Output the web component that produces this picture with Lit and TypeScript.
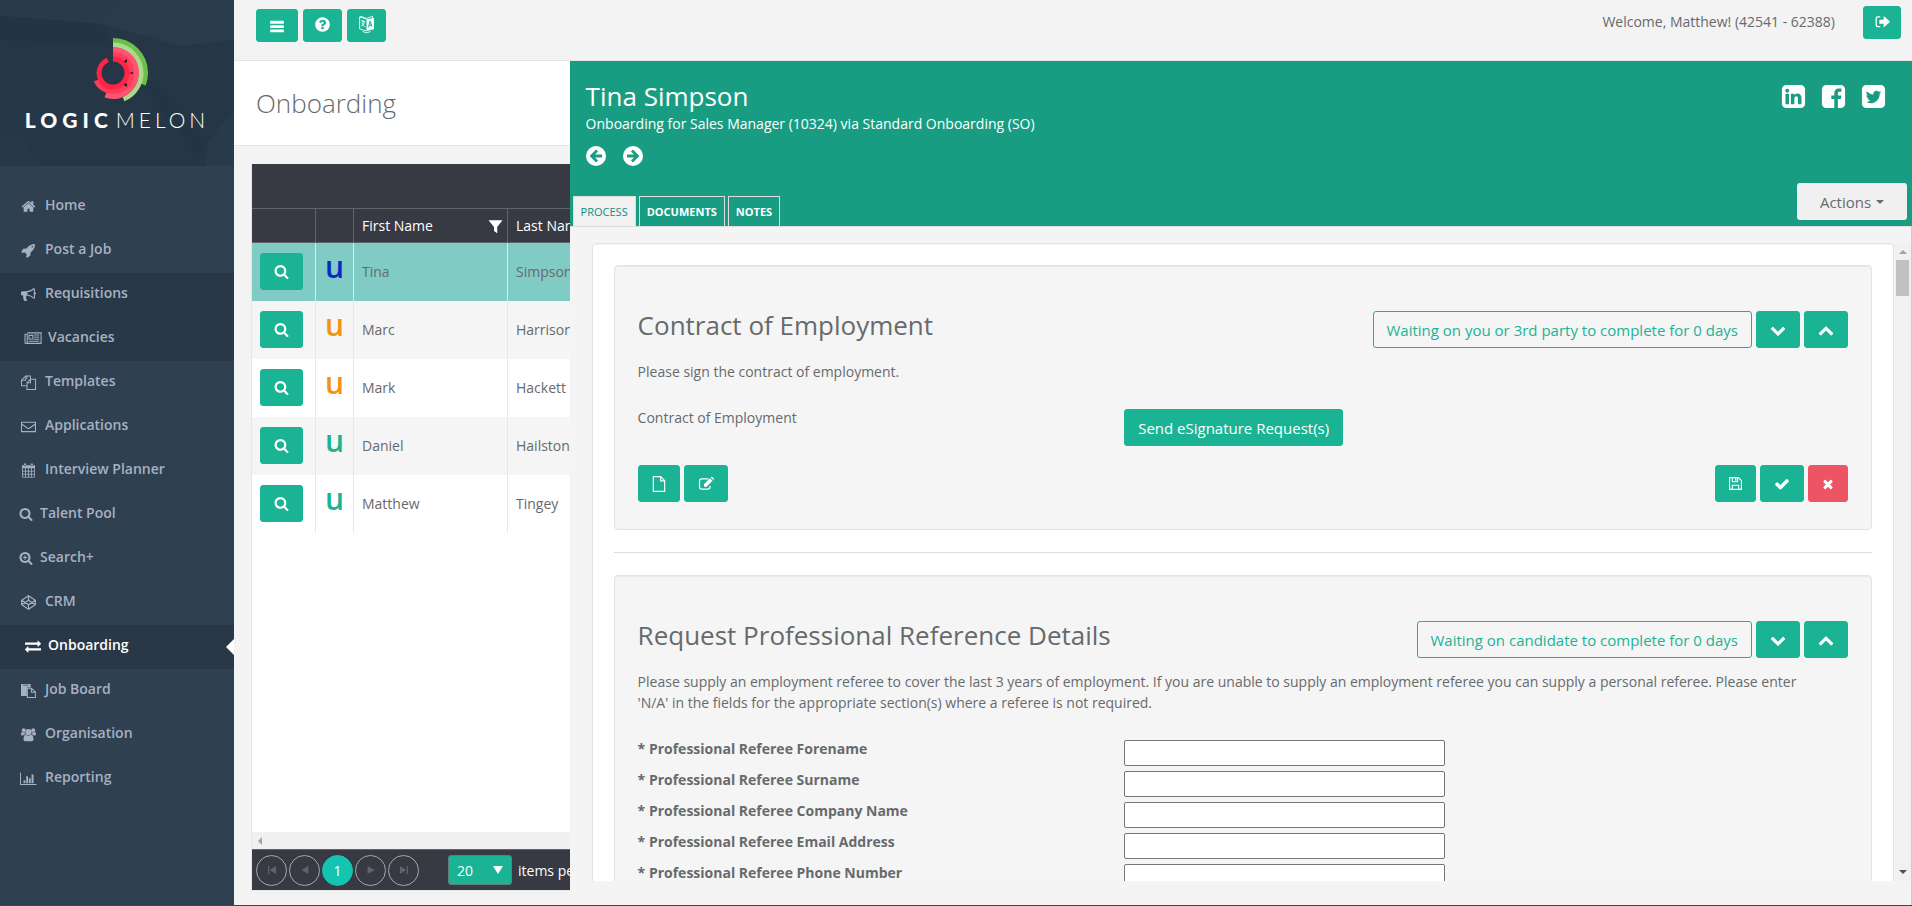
import { LitElement, html, css, svg } from "lit";
import { customElement, property } from "lit/decorators.js";
import { classMap } from "lit/directives/class-map.js";

const line = (d: string, w = 120) =>
  svg`<path d=${d} fill="none" stroke="currentColor" stroke-width=${w} />`;
const solid = (d: string) => svg`<path d=${d} fill="currentColor" fill-rule="evenodd" />`;

const glyphs: Record<string, unknown> = {
  home: solid("M1472 992v480q0 26-19 45t-45 19h-384v-384h-256v384h-384q-26 0-45-19t-19-45v-480q0-1 .5-3t.5-3l575-474 575 474q1 2 1 6zm223-69l-62 74q-8 9-21 11h-3q-13 0-21-7l-692-577-692 577q-12 8-24 7-13-2-21-11l-62-74q-8-10-7-23.5t11-21.5l719-599q32-26 76-26t76 26l244 204v-195q0-14 9-23t23-9h192q14 0 23 9t9 23v408l219 182q10 8 11 21.5t-7 23.5z"),
  rocket: solid("M1440 448q0-40-28-68t-68-28-68 28-28 68 28 68 68 28 68-28 28-68zm224-288q0 249-75.5 430.5t-253.5 360.5q-81 80-195 176l-20 379q-2 16-16 26l-384 224q-7 4-16 4-12 0-23-9l-64-64q-13-14-8-32l85-276-281-281-276 85q-3 1-9 1-14 0-23-9l-64-64q-17-19-5-39l224-384q10-14 26-16l379-20q96-114 176-195 188-187 358-258t431-71q14 0 24 9.5t10 22.5z"),
  bullhorn: solid("M1664 640q53 0 90.5 37.5t37.5 90.5-37.5 90.5-90.5 37.5v384q0 52-38 90t-90 38q-417-347-812-380-58 19-91 66t-31 100.5 40 92.5q-20 33-23 65.5t6 58 33.5 55 48 50 61.5 50.5q-29 58-111.5 83t-168.5 11.5-132-55.5q-7-23-29.5-87.5t-32-94.5-23-89-15-101 3.5-98.5 22-110.5h-122q-66 0-113-47t-47-113v-192q0-66 47-113t113-47h480q435 0 896-384 52 0 90 38t38 90v384zm-128 604v-954q-394 302-768 343v270q377 42 768 341z"),
  newspaper: svg`${line("M250 320H1800V1500H110Q0 1500 0 1390V480H250V1390Q250 1500 130 1500")}${line("M450 600H880V1000H450Z")}${line("M1020 560H1600M1020 800H1600M1020 1040H1600M400 1260H1600", 110)}`,
  files: svg`${line("M700 440V120H1130V440M1130 560V120H570L60 620V1280H700")}${line("M60 620H570V120")}${line("M1130 500H1740V1740H720V920L1130 500V920H720")}`,
  envelope: svg`${line("M64 380H1728V1510H64Z", 128)}${line("M100 620L800 1110Q896 1170 992 1110L1692 620", 128)}`,
  calendar: svg`${solid("M128 256H1664V640H128ZM380 60H620V400H380ZM1170 60H1410V400H1170Z")}${line("M184 400H1608V1700H184ZM540 600V1700M896 600V1700M1252 600V1700M184 980H1608M184 1340H1608", 100)}`,
  search: solid("M1216 832q0-185-131.5-316.5t-316.5-131.5-316.5 131.5-131.5 316.5 131.5 316.5 316.5 131.5 316.5-131.5 131.5-316.5zm512 832q0 52-38 90t-90 38q-54 0-90-38l-343-342q-179 124-399 124-143 0-273.5-55.5t-225-150-150-225-55.5-273.5 55.5-273.5 150-225 225-150 273.5-55.5 273.5 55.5 225 150 150 225 55.5 273.5q0 220-124 399l343 343q37 37 37 90z"),
  searchPlus: svg`${solid("M1216 832q0-185-131.5-316.5t-316.5-131.5-316.5 131.5-131.5 316.5 131.5 316.5 316.5 131.5 316.5-131.5 131.5-316.5zm512 832q0 52-38 90t-90 38q-54 0-90-38l-343-342q-179 124-399 124-143 0-273.5-55.5t-225-150-150-225-55.5-273.5 55.5-273.5 150-225 225-150 273.5-55.5 273.5 55.5 225 150 150 225 55.5 273.5q0 220-124 399l343 343q37 37 37 90z")}${line("M768 560V1104M496 832H1040", 130)}`,
  codepen: line("M896 80L1710 620V1172L896 1712L82 1172V620ZM896 80V620M896 1712V1172M82 620L896 1172L1710 620M82 1172L896 620L1710 1172", 140),
  exchange: solid("M1792 1184v192q0 13-9.500 22.500t-22.500 9.500h-1376v192q0 13-9.500 22.500t-22.500 9.500q-12 0-24-10l-319-320q-9-9-9-22 0-14 9-23l320-320q9-9 23-9 13 0 22.500 9.500t9.500 22.500v192h1376q13 0 22.500 9.500t9.500 22.500zm0-544q0 14-9 23l-320 320q-9 9-23 9-13 0-22.500-9.500t-9.500-22.500v-192h-1376q-13 0-22.500-9.500t-9.500-22.500v-192q0-13 9.500-22.500t22.500-9.500h1376v-192q0-14 9-23t23-9q12 0 24 10l319 319q9 9 9 23z"),
  paste: svg`${solid("M0 128H1152V540H700V1540H0ZM256 200V300H900V200Z")}${line("M760 640H1240L1720 1080V1730H760ZM1240 640V1100H1720")}`,
  users: svg`<g fill="currentColor"><circle cx="896" cy="620" r="370" /><circle cx="330" cy="380" r="230" /><circle cx="1462" cy="380" r="230" /><path d="M300 1500Q300 960 600 940Q896 1160 1192 940Q1492 960 1492 1500Q1492 1700 1300 1700H492Q300 1700 300 1500Z" /><path d="M0 860Q0 600 130 600Q330 700 470 620Q440 800 540 900Q300 900 240 1010H140Q0 1010 0 860Z" /><path d="M1792 860Q1792 600 1662 600Q1462 700 1322 620Q1352 800 1252 900Q1492 900 1552 1010H1652Q1792 1010 1792 860Z" /></g>`,
  chart: svg`${line("M-60 200V1600H1860", 120)}${solid("M300 1100H520V1450H300ZM620 620H840V1450H620ZM940 860H1160V1450H940ZM1260 420H1500V1450H1260Z")}`,
  bars: solid("M192 320H1600Q1664 320 1664 384V576Q1664 640 1600 640H192Q128 640 128 576V384Q128 320 192 320ZM192 800H1600Q1664 800 1664 864V1056Q1664 1120 1600 1120H192Q128 1120 128 1056V864Q128 800 192 800ZM192 1280H1600Q1664 1280 1664 1344V1536Q1664 1600 1600 1600H192Q128 1600 128 1536V1344Q128 1280 192 1280Z"),
  question: solid("M1024 1376v-192q0-14-9-23t-23-9h-192q-14 0-23 9t-9 23v192q0 14 9 23t23 9h192q14 0 23-9t9-23zm256-672q0-88-55.5-163t-138.5-116-170-41q-243 0-371 213-15 24 8 42l132 100q7 6 19 6 16 0 25-12 53-68 86-92 34-24 86-24 48 0 85.5 26t37.5 59q0 38-20 61t-68 45q-63 28-115.5 86.5t-52.5 125.5v36q0 14 9 23t23 9h192q14 0 23-9t9-23q0-19 21.5-49.5t54.5-49.5q32-18 49-28.5t46-35 44.5-48 28-60.5 12.5-81zm384 192q0 209-103 385.5t-279.5 279.5-385.5 103-385.5-103-279.5-279.5-103-385.5 103-385.5 279.5-279.5 385.5-103 385.5 103 279.5 279.5 103 385.5z"),
  language: svg`${line("M896 330L170 90V1360L896 1580M280 200V30L896 260L1540 30V300M480 1640Q900 1900 1320 1640", 90)}${line("M330 500L740 640M540 430V600M690 620Q600 950 330 1090M400 700Q540 980 760 1150", 100)}${solid("M896 330L1680 200V1400L896 1580ZM1230 500L1040 1200L1170 1170L1215 1010H1350L1395 1120L1520 1090L1320 490ZM1278 680L1325 900H1230Z")}`,
  signOut: svg`${line("M700 320H420Q250 320 250 490V1240Q250 1410 420 1410H700", 150)}${solid("M640 640H1080V300Q1080 220 1150 280L1750 820Q1800 870 1750 920L1150 1450Q1080 1510 1080 1430V1100H640Q600 1100 600 1060V680Q600 640 640 640Z")}`,
  linkedin: solid("M365 1414h231v-694h-231v694zm246-908q-1-52-36-86t-93-34-94.5 34-36.5 86q0 51 35.5 85.5t92.5 34.5h1q59 0 95-34.5t36-85.5zm585 908h231v-398q0-154-73-233t-193-79q-136 0-209 117h2v-101h-231q3 66 0 694h231v-388q0-38 7-56 15-35 45-59.5t74-24.5q116 0 116 157v371zm468-998v960q0 119-84.5 203.5t-203.5 84.5h-960q-119 0-203.5-84.5t-84.5-203.5v-960q0-119 84.5-203.5t203.5-84.5h960q119 0 203.5 84.5t84.5 203.5z"),
  facebook: solid("M1376 128q119 0 203.5 84.5t84.5 203.5v960q0 119-84.5 203.5t-203.5 84.5h-188v-595h199l30-232h-229v-148q0-56 23.5-84t91.5-28l122-1v-207q-63-9-178-9-136 0-217.5 80t-81.5 226v171h-200v232h200v595h-532q-119 0-203.5-84.5t-84.5-203.5v-960q0-119 84.5-203.5t203.5-84.5h960z"),
  twitter: solid("M1408 610q-56 25-121 34 68-40 93-117-65 38-134 51-61-66-153-66-87 0-148.5 61.5t-61.5 148.5q0 29 5 48-129-7-242-65t-192-155q-29 50-29 106 0 114 91 175-47-1-100-26v2q0 75 50 133.5t123 72.5q-29 8-51 8-13 0-39-4 21 63 74.5 104t121.5 42q-116 90-261 90-26 0-50-3 148 94 322 94 112 0 210-35.5t168-95 120.5-137 75-162 24.5-168.5q0-18-1-27 63-45 105-109zm256-194v960q0 119-84.5 203.5t-203.5 84.5h-960q-119 0-203.5-84.5t-84.5-203.5v-960q0-119 84.5-203.5t203.5-84.5h960q119 0 203.5 84.5t84.5 203.5z"),
  circleLeft: svg`<circle cx="896" cy="896" r="896" fill="currentColor" /><path d="M990 400L500 896L990 1392M540 896H1440" fill="none" stroke="#199d82" stroke-width="250" />`,
  circleRight: svg`<circle cx="896" cy="896" r="896" fill="currentColor" /><path d="M802 400L1292 896L802 1392M1252 896H352" fill="none" stroke="#199d82" stroke-width="250" />`,
  down: solid("M1683 808l-742 741q-19 19-45 19t-45-19l-742-741q-19-19-19-45.500t19-45.500l166-165q19-19 45-19t45 19l531 531 531-531q19-19 45-19t45 19l166 165q19 19 19 45.500t-19 45.500z"),
  up: solid("M1683 1331l-166 165q-19 19-45 19t-45-19l-531-531-531 531q-19 19-45 19t-45-19l-166-165q-19-19-19-45.500t19-45.500l742-741q19-19 45-19t45 19l742 741q19 19 19 45.500t-19 45.500z"),
  file: svg`${line("M260 64H1080L1532 520V1728H260Z", 128)}${line("M1080 64V540H1532", 128)}`,
  edit: svg`${line("M1180 320H420Q170 320 170 560V1240Q170 1480 420 1480H1100Q1340 1480 1340 1240V1130", 140)}${solid("M1340 250L1630 540L960 1210H670V920ZM1420 180L1480 120Q1540 60 1600 120L1760 280Q1820 340 1760 400L1700 460Z")}`,
  save: svg`${line("M192 192H1250L1600 540V1600H192Z", 128)}${line("M520 192V680H1150V192M520 1600V1100H1280V1600", 128)}${solid("M840 260H1010V580H840Z")}`,
  check: solid("M1671 566q0 40-28 68l-724 724-136 136q-28 28-68 28t-68-28l-136-136-362-362q-28-28-28-68t28-68l136-136q28-28 68-28t68 28l294 295 656-657q28-28 68-28t68 28l136 136q28 28 28 68z"),
  times: solid("M1490 1322q0 40-28 68l-136 136q-28 28-68 28t-68-28l-294-294-294 294q-28 28-68 28t-68-28l-136-136q-28-28-28-68t28-68l294-294-294-294q-28-28-28-68t28-68l136-136q28-28 68-28t68 28l294 294 294-294q28-28 68-28t68 28l136 136q28 28 28 68t-28 68l-294 294 294 294q28 28 28 68z"),
  filter: solid("M60 160H1732L1100 960V1700L720 1440V960Z"),
  first: solid("M300 300H480V1492H300ZM1500 300V1492L560 896Z"),
  prev: solid("M1400 300V1492L360 896Z"),
  next: solid("M392 300V1492L1432 896Z"),
  last: solid("M1492 300H1312V1492H1492ZM292 300V1492L1232 896Z"),
};

@customElement("lm-icon")
class LmIcon extends LitElement {
  @property() name = "";
  @property({ type: Number }) size = 14;
  static styles = css`
    :host { display: inline-flex; flex: none; }
    svg { display: block; overflow: visible; }
  `;
  render() {
    return html`<svg viewBox="0 0 1792 1792" width=${this.size} height=${this.size} aria-hidden="true">${glyphs[this.name]}</svg>`;
  }
}

const base = css`
  * { box-sizing: border-box; }
  button, input, select { font-family: inherit; margin: 0; }
  .btn {
    display: inline-flex; align-items: center; justify-content: center;
    border: 1px solid #1ab394; border-radius: 3px; background: #1ab394; color: #fff;
    font-size: 15px; line-height: 22px; padding: 0 13px; height: 37px; cursor: pointer;
  }
`;

interface NavItem { icon: string; label: string; kind?: "tight" | "wide"; dark?: boolean; active?: boolean }
const nav: NavItem[] = [
  { icon: "home", label: "Home" },
  { icon: "rocket", label: "Post a Job" },
  { icon: "bullhorn", label: "Requisitions", dark: true },
  { icon: "newspaper", label: "Vacancies", kind: "wide", dark: true },
  { icon: "files", label: "Templates" },
  { icon: "envelope", label: "Applications" },
  { icon: "calendar", label: "Interview Planner" },
  { icon: "search", label: "Talent Pool", kind: "tight" },
  { icon: "searchPlus", label: "Search+", kind: "tight" },
  { icon: "codepen", label: "CRM" },
  { icon: "exchange", label: "Onboarding", kind: "wide", dark: true, active: true },
  { icon: "paste", label: "Job Board" },
  { icon: "users", label: "Organisation" },
  { icon: "chart", label: "Reporting" },
];

@customElement("lm-sidebar")
class LmSidebar extends LitElement {
  static styles = [base, css`
    :host { display: block; background: #2f4050; }
    .brand { position: relative; height: 166px; background: #253746; overflow: hidden; display: flex; flex-direction: column; align-items: center; padding-top: 36px; }
    .facets { position: absolute; inset: 0; width: 100%; height: 100%; }
    .mark { position: relative; width: 74px; height: 74px; margin-left: -8px; }
    .word { position: relative; display: flex; gap: 3px; color: #fff; font-family: Lato, "Open Sans", sans-serif; font-size: 21px; line-height: 20px; }
    .strong { font-weight: 900; letter-spacing: 5px; }
    .thin { font-weight: 300; letter-spacing: 4px; }
    nav { padding-top: 19px; }
    a {
      position: relative; display: flex; align-items: center; height: 44px; padding: 0 20px 0 21px; gap: 9px;
      color: #a7b1c2; font-size: 14px; font-weight: 600; line-height: 20px; text-decoration: none;
    }
    lm-icon { margin-bottom: 2px; }
    .label { margin-bottom: 4px; }
    .tight { padding-left: 19px; gap: 7px; }
    .wide { padding-left: 25px; gap: 7px; }
    .dark { background: #293846; }
    .active { color: #fff; }
    .active::after { content: ""; position: absolute; right: 0; top: 14px; border: 8px solid transparent; border-left: 0; border-right-color: #fff; }
  `];
  iconSize(kind?: string) {
    return kind === "wide" ? 16 : kind === "tight" ? 14 : 15;
  }
  ring(r: number, w: number, deg: number, color: string) {
    return svg`<circle cx="37" cy="37" r=${r} fill="none" stroke=${color} stroke-width=${w} pathLength="360" stroke-dasharray="${deg} 360" transform="rotate(-90 37 37)" />`;
  }
  render() {
    return html`
      <div class="brand">
        <svg class="facets" viewBox="0 0 234 166" preserveAspectRatio="none" aria-hidden="true">
          <path d="M0 0H120L101 24L0 16Z" fill="#273b4a" />
          <path d="M120 0H234V40L180 46L101 24Z" fill="#283c4b" />
          <path d="M0 16L101 24L115 46L0 40Z" fill="#233443" />
          <path d="M140 70L208 142L198 155L120 60Z" fill="#233443" />
          <path d="M208 142L234 110V166H206Z" fill="#273b4a" />
          <path d="M0 138L18 132L40 166H0Z" fill="#273948" />
        </svg>
        <svg class="mark" viewBox="0 0 74 74" aria-hidden="true">
          ${this.ring(32.5, 5, 111, "#6cc04a")}
          ${this.ring(28, 5, 158, "#a9da8d")}
          ${this.ring(23, 6, 199, "#ff546f")}
          ${this.ring(18.5, 5, 246, "#ff3c5a")}
          ${this.ring(14, 5, 338, "#ff2346")}
          <g fill="#1d1d26"><path d="M48 25l3-2v3l-2 1zM53 37l4-1v2zM48 49l3 2v-3l-2-1z" /></g>
        </svg>
        <div class="word"><span class="strong">LOGIC</span><span class="thin">MELON</span></div>
      </div>
      <nav>
        ${nav.map((n) => html`
          <a href="#" class=${classMap({ tight: n.kind === "tight", wide: n.kind === "wide", dark: !!n.dark, active: !!n.active })}>
            <lm-icon name=${n.icon} size=${this.iconSize(n.kind)}></lm-icon><span class="label">${n.label}</span>
          </a>`)}
      </nav>`;
  }
}

const people = [
  { first: "Tina", last: "Simpson", tone: "blue" },
  { first: "Marc", last: "Harrison", tone: "orange" },
  { first: "Mark", last: "Hackett", tone: "orange" },
  { first: "Daniel", last: "Hailstone", tone: "green" },
  { first: "Matthew", last: "Tingey", tone: "green" },
];

@customElement("lm-grid")
class LmGrid extends LitElement {
  static styles = [base, css`
    :host { display: flex; flex-direction: column; background: #fff; border: 1px solid #e7e7e7; border-top: 0; color: #676a6c; font-size: 14px; }
    .group { height: 44px; background: #373a43; }
    table { width: 100%; table-layout: fixed; border-spacing: 0; }
    .c1 { width: 64px; } .c2 { width: 38px; } .c3 { width: 154px; }
    th { height: 35px; background: #373a43; border: solid #606369; border-width: 1px 1px 1px 0; color: #fff; font-weight: 400; text-align: left; padding: 0 4px 0 8px; }
    .head { display: flex; align-items: center; justify-content: space-between; line-height: 20px; }
    .funnel { margin-top: 2px; display: flex; }
    td { height: 58px; padding: 0 8px 1px; border-right: 1px solid #e7e7e7; overflow: hidden; white-space: nowrap; }
    tr:nth-child(even) td { background: #f5f5f5; }
    tr.sel td { background: #80cbc4; }
    td .btn { width: 43px; padding: 0; vertical-align: middle; }
    td.mark { padding: 0 0 10px; text-align: center; font-size: 30px; line-height: 32px; font-weight: 600; }
    .blue { color: #0a28c4; } .orange { color: #f39314; } .green { color: #1ab394; }
    .fill { flex: 1; }
    .hscroll { height: 17px; background: #f0f0f0; display: flex; align-items: center; padding-left: 6px; }
    .hscroll i { border: 4px solid transparent; border-left: 0; border-right-color: #a3a3a3; }
    .pager { height: 41px; background: #373a43; border-top: 1px solid #606369; display: flex; align-items: center; padding-left: 4px; gap: 2px; color: #fff; }
    .pg { width: 31px; height: 31px; flex: none; border-radius: 50%; border: 1px solid #a5a7ab; background: none; color: #60636a; padding: 0; display: flex; align-items: center; justify-content: center; font-size: 14px; }
    .cur { background: #13c4b1; border-color: #13c4b1; color: #fff; }
    label { display: flex; align-items: center; gap: 6px; margin-left: 27px; }
    .size { position: relative; display: flex; }
    .size::after { content: ""; position: absolute; right: 9px; top: 11px; border: 5px solid transparent; border-top: 8px solid #fff; border-bottom: 0; pointer-events: none; }
    select { appearance: none; width: 64px; height: 30px; border: 1px solid #5f7f7b; border-radius: 3px; background: #1ab394; color: #fff; font-size: 14px; padding: 0 8px; }
  `];
  render() {
    return html`
      <div class="group"></div>
      <table>
        <colgroup><col class="c1" /><col class="c2" /><col class="c3" /><col /></colgroup>
        <thead><tr><th></th><th></th>
          <th><div class="head">First Name<span class="funnel"><lm-icon name="filter" size="15"></lm-icon></span></div></th>
          <th><div class="head">Last Name</div></th></tr></thead>
        <tbody>
          ${people.map((p, i) => html`<tr class=${i === 0 ? "sel" : ""}>
            <td><button class="btn" aria-label="View ${p.first} ${p.last}"><lm-icon name="search" size="15"></lm-icon></button></td>
            <td class="mark ${p.tone}">u</td><td>${p.first}</td><td>${p.last}</td></tr>`)}
        </tbody>
      </table>
      <div class="fill"></div>
      <div class="hscroll"><i></i></div>
      <div class="pager">
        <button class="pg" aria-label="First page"><lm-icon name="first" size="12"></lm-icon></button>
        <button class="pg" aria-label="Previous page"><lm-icon name="prev" size="12"></lm-icon></button>
        <button class="pg cur">1</button>
        <button class="pg" aria-label="Next page"><lm-icon name="next" size="12"></lm-icon></button>
        <button class="pg" aria-label="Last page"><lm-icon name="last" size="12"></lm-icon></button>
        <label><span class="size"><select><option>20</option><option>50</option></select></span>items per page</label>
      </div>`;
  }
}

const fields = ["Forename", "Surname", "Company Name", "Email Address", "Phone Number"];

@customElement("lm-candidate")
class LmCandidate extends LitElement {
  static styles = [base, css`
    :host { display: flex; flex-direction: column; background: #f4f4f4; color: #676a6c; font-size: 14px; line-height: 21px; }
    header { flex: none; background: #199d82; color: #fff; border-bottom: 1px solid #ddd; display: flex; justify-content: space-between; padding: 17px 5px 0 3px; height: 166px; }
    .left, .right { display: flex; flex-direction: column; justify-content: space-between; }
    .who { padding-left: 13px; }
    h1 { margin: 0; font-size: 26px; font-weight: 400; line-height: 36px; }
    .sub { line-height: 20px; }
    .step { display: flex; gap: 17px; margin-top: 12px; }
    .step button, .social a { border: 0; padding: 0; background: none; color: #fff; display: flex; }
    .tabs { display: flex; gap: 3px; }
    .tab { height: 30px; border: 1px solid #ddd; border-bottom: 0; background: none; color: #fff; font-size: 11px; font-weight: 700; padding: 0 7px; }
    .tab.on { background: #f1f1f1; color: #0f8f87; font-weight: 400; }
    .right { align-items: flex-end; padding-bottom: 6px; }
    .social { display: flex; gap: 13px; padding: 5px 20px 0 0; }
    .actions { width: 110px; height: 37px; border: 0; border-radius: 3px; background: #f0f0f0; color: #676a6c; font-size: 15px; display: flex; align-items: center; justify-content: center; gap: 5px; }
    .actions i { border: 4px solid transparent; border-top-color: #676a6c; border-bottom: 0; }
    .body { flex: 1; min-height: 0; display: flex; padding: 16px 0 24px 22px; border-right: 1px solid #ccc; }
    .view { flex: 1; min-width: 0; overflow: hidden; }
    .sheet { background: #fff; border: 1px solid #e3e3e3; border-radius: 4px; padding: 21px; min-height: 100%; box-shadow: inset 0 1px 1px rgba(0, 0, 0, 0.05); }
    .bar { width: 17px; background: #f1f1f1; display: flex; flex-direction: column; align-items: center; padding: 7px 0; }
    .bar .u { border: 4px solid transparent; border-top: 0; border-bottom-color: #a3a3a3; }
    .bar .thumb { width: 13px; height: 36px; background: #c1c1c1; margin-top: 6px; }
    .bar .d { border: 4px solid transparent; border-bottom: 0; border-top-color: #505050; margin-top: auto; }
    .well { background: #f5f5f5; border: 1px solid #e3e3e3; border-radius: 4px; padding: 45px 23px 27px; box-shadow: inset 0 1px 1px rgba(0, 0, 0, 0.05); }
    .top, .foot { display: flex; justify-content: space-between; align-items: flex-start; }
    h2 { margin: 0; font-size: 26px; font-weight: 400; line-height: 28px; }
    .set { display: flex; gap: 4px; }
    .ghost { background: none; color: #1ab394; }
    p { margin: 13px 0 0; padding-right: 30px; }
    .row { display: grid; grid-template-columns: 2fr 3fr; gap: 4px; align-items: start; margin-top: 27px; line-height: 18px; }
    .foot { margin-top: 19px; }
    .slim { padding: 0 12px; }
    .red { background: #ed5565; border-color: #ed5565; }
    hr { border: 0; border-top: 1px solid #ddd; margin: 22px 0; }
    .form { display: grid; gap: 5px; margin-top: 27px; }
    .form .row { margin: 0; }
    label { font-weight: 700; }
    .row .btn, input { display: block; }
    input { width: 321px; height: 26px; border: 1px solid #767676; border-radius: 2px; background: #fff; padding: 1px 4px; font-size: 14px; }
  `];
  head(title: string, status: string) {
    return html`<div class="top"><h2>${title}</h2>
      <div class="set"><button class="btn ghost">${status}</button>
        <button class="btn" aria-label="Move down"><lm-icon name="down" size="16"></lm-icon></button>
        <button class="btn" aria-label="Move up"><lm-icon name="up" size="16"></lm-icon></button></div></div>`;
  }
  render() {
    return html`
      <header>
        <div class="left">
          <div class="who">
            <h1>Tina Simpson</h1>
            <div class="sub">Onboarding for Sales Manager (10324) via Standard Onboarding (SO)</div>
            <div class="step">
              <button aria-label="Previous"><lm-icon name="circleLeft" size="20"></lm-icon></button>
              <button aria-label="Next"><lm-icon name="circleRight" size="20"></lm-icon></button>
            </div>
          </div>
          <div class="tabs"><button class="tab on">PROCESS</button><button class="tab">DOCUMENTS</button><button class="tab">NOTES</button></div>
        </div>
        <div class="right">
          <div class="social">
            ${["linkedin", "facebook", "twitter"].map((n) => html`<a href="#" aria-label=${n}><lm-icon name=${n} size="27"></lm-icon></a>`)}
          </div>
          <button class="actions">Actions<i></i></button>
        </div>
      </header>
      <div class="body">
        <div class="view"><div class="sheet">
          <section class="well">
            ${this.head("Contract of Employment", "Waiting on you or 3rd party to complete for 0 days")}
            <p>Please sign the contract of employment.</p>
            <div class="row"><span>Contract of Employment</span><div><button class="btn">Send eSignature Request(s)</button></div></div>
            <div class="foot">
              <div class="set">
                <button class="btn slim" aria-label="Document"><lm-icon name="file" size="16"></lm-icon></button>
                <button class="btn" aria-label="Edit"><lm-icon name="edit" size="16"></lm-icon></button>
              </div>
              <div class="set">
                <button class="btn slim" aria-label="Save"><lm-icon name="save" size="15"></lm-icon></button>
                <button class="btn" aria-label="Complete"><lm-icon name="check" size="16"></lm-icon></button>
                <button class="btn slim red" aria-label="Reject"><lm-icon name="times" size="14"></lm-icon></button>
              </div>
            </div>
          </section>
          <hr />
          <section class="well">
            ${this.head("Request Professional Reference Details", "Waiting on candidate to complete for 0 days")}
            <p>Please supply an employment referee to cover the last 3 years of employment. If you are unable to supply an employment referee you can supply a personal referee. Please enter 'N/A' in the fields for the appropriate section(s) where a referee is not required.</p>
            <div class="form">
              ${fields.map((f, i) => html`<div class="row"><label for="f${i}">* Professional Referee ${f}</label><div><input id="f${i}" type="text" /></div></div>`)}
            </div>
          </section>
        </div></div>
        <div class="bar" aria-hidden="true"><i class="u"></i><i class="thumb"></i><i class="d"></i></div>
      </div>`;
  }
}

@customElement("app-root")
class AppRoot extends LitElement {
  static styles = [base, css`
    :host { display: grid; grid-template-columns: 234px 1fr; height: 100vh; box-sizing: border-box; overflow: hidden; border-bottom: 1px solid #444; background: #f3f3f3; color: #676a6c; font-family: "Open Sans", "Noto Sans", sans-serif; font-size: 14px; }
    main { position: relative; display: flex; flex-direction: column; min-width: 0; }
    .topbar { flex: none; height: 61px; border-bottom: 1px solid #e3e4e5; display: flex; justify-content: space-between; padding: 0 11px 0 22px; }
    .tools { display: flex; gap: 5px; padding-top: 9px; }
    .tools .btn, .user .btn { height: 33px; padding: 0 10px 2px; }
    .tools .menu { padding: 0 12px; }
    .user { display: flex; gap: 28px; padding-top: 6px; line-height: 32px; }
    .title { flex: none; background: #fff; border-bottom: 1px solid #e3e4e5; height: 85px; padding: 22px; }
    h1 { margin: 0; font-size: 26px; font-weight: 300; line-height: 40px; }
    lm-grid { flex: 1; margin: 18px 17px 14px; }
    lm-candidate { position: absolute; right: 0; top: 61px; bottom: 0; width: 80%; }
  `];
  render() {
    return html`
      <lm-sidebar></lm-sidebar>
      <main>
        <div class="topbar">
          <div class="tools">
            <button class="btn menu" aria-label="Menu"><lm-icon name="bars" size="16"></lm-icon></button>
            <button class="btn" aria-label="Help"><lm-icon name="question" size="17"></lm-icon></button>
            <button class="btn" aria-label="Language"><lm-icon name="language" size="17"></lm-icon></button>
          </div>
          <div class="user"><span>Welcome, Matthew! (42541 - 62388)</span>
            <button class="btn" aria-label="Sign out"><lm-icon name="signOut" size="16"></lm-icon></button></div>
        </div>
        <div class="title"><h1>Onboarding</h1></div>
        <lm-grid></lm-grid>
        <lm-candidate></lm-candidate>
      </main>`;
  }
}
